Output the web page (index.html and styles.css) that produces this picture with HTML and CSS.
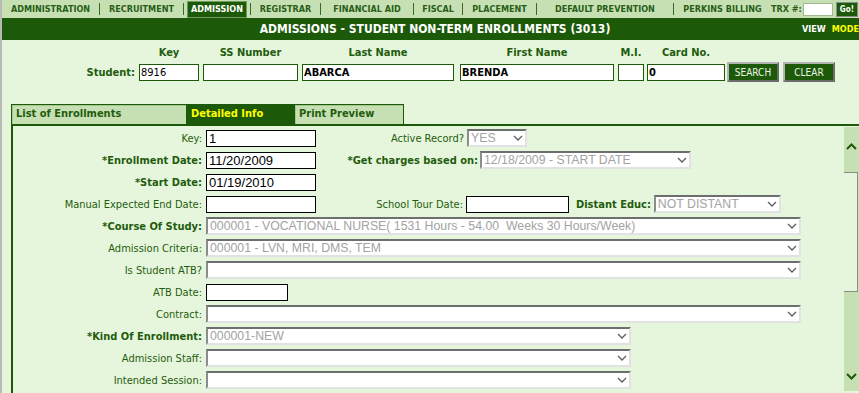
FILE: index.html
```html
<!DOCTYPE html>
<html lang="en">
<head>
    <meta charset="UTF-8">
    <meta name="viewport" content="width=device-width, initial-scale=1.0">
    <title>Admissions - Student Non-Term Enrollments</title>
    <link rel="stylesheet" href="styles.css">
</head>
<body>
    <div class="menu">
        <a class="menu-item mi-administration" href="#">ADMINISTRATION</a><span class="sep"></span>
        <a class="menu-item mi-recruitment" href="#">RECRUITMENT</a><span class="sep"></span>
        <a class="menu-item mi-admission" href="#"><span class="active">ADMISSION</span></a><span class="sep"></span>
        <a class="menu-item mi-registrar" href="#">REGISTRAR</a><span class="sep"></span>
        <a class="menu-item mi-financial" href="#">FINANCIAL AID</a><span class="sep"></span>
        <a class="menu-item mi-fiscal" href="#">FISCAL</a><span class="sep"></span>
        <a class="menu-item mi-placement" href="#">PLACEMENT</a><span class="sep"></span>
        <a class="menu-item mi-default" href="#">DEFAULT PREVENTION</a><span class="sep"></span>
        <a class="menu-item mi-perkins" href="#">PERKINS BILLING</a>
        <div class="trx">
            <span>TRX #:</span>
            <input type="text" class="trx-input">
            <button class="go">Go!</button>
        </div>
    </div>

    <div class="titlebar">
        <h1>ADMISSIONS - STUDENT NON-TERM ENROLLMENTS (3013)</h1>
        <div class="mode">VIEW<span>MODE</span></div>
    </div>

    <div class="search-grid">
        <span></span>
        <span class="col-head f-key">Key</span>
        <span class="col-head f-ss">SS Number</span>
        <span class="col-head f-last">Last Name</span>
        <span class="col-head f-first">First Name</span>
        <span class="col-head f-mi">M.I.</span>
        <span class="col-head f-card">Card No.</span>
        <span></span>
        <span></span>

        <label class="student-label" for="s-key">Student:</label>
        <input type="text" id="s-key" class="s-input f-key" value="8916">
        <input type="text" class="s-input f-ss" value="">
        <input type="text" class="s-input f-last strong" value="ABARCA">
        <input type="text" class="s-input f-first strong" value="BRENDA">
        <input type="text" class="s-input f-mi" value="">
        <input type="text" class="s-input f-card strong" value="0">
        <button class="btn">SEARCH</button>
        <button class="btn">CLEAR</button>
    </div>

    <div class="tabs">
        <div class="tab tab-list">List of Enrollments</div>
        <div class="tab tab-detail active">Detailed Info</div>
        <div class="tab tab-print">Print Preview</div>
    </div>

    <div class="panel">
        <div class="form">
            <div class="row">
                <label class="lbl">Key:</label>
                <input type="text" class="txt" value="1">
                <label class="lbl2 sub-active">Active Record?</label>
                <span class="sel w-active">
                    <select disabled><option>YES</option></select>
                    <svg class="chev" viewBox="0 0 10 6"><polyline points="1,1 5,5 9,1"/></svg>
                </span>
            </div>
            <div class="row">
                <label class="lbl req">*Enrollment Date:</label>
                <input type="text" class="txt" value="11/20/2009">
                <label class="lbl2 sub-charges req">*Get charges based on:</label>
                <span class="sel w-charges">
                    <select disabled><option>12/18/2009 - START DATE</option></select>
                    <svg class="chev" viewBox="0 0 10 6"><polyline points="1,1 5,5 9,1"/></svg>
                </span>
            </div>
            <div class="row">
                <label class="lbl req">*Start Date:</label>
                <input type="text" class="txt" value="01/19/2010">
            </div>
            <div class="row">
                <label class="lbl">Manual Expected End Date:</label>
                <input type="text" class="txt" value="">
                <label class="lbl2 sub-tour">School Tour Date:</label>
                <input type="text" class="txt w-tour" value="">
                <label class="lbl-distant req">Distant Educ:</label>
                <span class="sel w-distant">
                    <select disabled><option>NOT DISTANT</option></select>
                    <svg class="chev" viewBox="0 0 10 6"><polyline points="1,1 5,5 9,1"/></svg>
                </span>
            </div>
            <div class="row">
                <label class="lbl req">*Course Of Study:</label>
                <span class="sel w-long">
                    <select disabled><option>000001 - VOCATIONAL NURSE( 1531 Hours - 54.00&nbsp; Weeks 30 Hours/Week)</option></select>
                    <svg class="chev" viewBox="0 0 10 6"><polyline points="1,1 5,5 9,1"/></svg>
                </span>
            </div>
            <div class="row">
                <label class="lbl">Admission Criteria:</label>
                <span class="sel w-long">
                    <select disabled><option>000001 - LVN, MRI, DMS, TEM</option></select>
                    <svg class="chev" viewBox="0 0 10 6"><polyline points="1,1 5,5 9,1"/></svg>
                </span>
            </div>
            <div class="row">
                <label class="lbl">Is Student ATB?</label>
                <span class="sel w-long">
                    <select><option></option></select>
                    <svg class="chev" viewBox="0 0 10 6"><polyline points="1,1 5,5 9,1"/></svg>
                </span>
            </div>
            <div class="row">
                <label class="lbl">ATB Date:</label>
                <input type="text" class="txt w-atb" value="">
            </div>
            <div class="row">
                <label class="lbl">Contract:</label>
                <span class="sel w-long">
                    <select><option></option></select>
                    <svg class="chev" viewBox="0 0 10 6"><polyline points="1,1 5,5 9,1"/></svg>
                </span>
            </div>
            <div class="row">
                <label class="lbl req">*Kind Of Enrollment:</label>
                <span class="sel w-short">
                    <select disabled><option>000001-NEW</option></select>
                    <svg class="chev" viewBox="0 0 10 6"><polyline points="1,1 5,5 9,1"/></svg>
                </span>
            </div>
            <div class="row">
                <label class="lbl">Admission Staff:</label>
                <span class="sel w-short">
                    <select><option></option></select>
                    <svg class="chev" viewBox="0 0 10 6"><polyline points="1,1 5,5 9,1"/></svg>
                </span>
            </div>
            <div class="row">
                <label class="lbl">Intended Session:</label>
                <span class="sel w-short">
                    <select><option></option></select>
                    <svg class="chev" viewBox="0 0 10 6"><polyline points="1,1 5,5 9,1"/></svg>
                </span>
            </div>
        </div>

        <div class="scrollbar">
            <div class="sb-up"><svg viewBox="0 0 11 7"><polyline points="1,6 5.5,1.5 10,6"/></svg></div>
            <div class="sb-gap"></div>
            <div class="sb-thumb"></div>
            <div class="sb-rest"></div>
            <div class="sb-down"><svg viewBox="0 0 11 7"><polyline points="1,1 5.5,5.5 10,1"/></svg></div>
        </div>
    </div>
</body>
</html>
```

FILE: styles.css
```css
html {
    overflow: hidden;
}

body {
    margin: 0;
    min-height: 100vh;
    border-left: 2px solid #b9b9b9;
    background-color: #e6f6dc;
    font-family: "DejaVu Sans Condensed", "DejaVu Sans", sans-serif;
    font-stretch: condensed;
    font-size: 11px;
    color: #1f5c0d;
}

/* top menu */
.menu {
    display: flex;
    align-items: center;
    height: 18px;
    background-color: #c7e0b3;
}

.menu-item {
    display: block;
    text-align: center;
    font-size: 9px;
    font-weight: bold;
    line-height: 12px;
    color: #285e18;
    text-decoration: none;
}

.mi-administration { width: 97px; }
.mi-recruitment { width: 83px; }
.mi-admission { width: 66px; }
.mi-registrar { width: 69px; }
.mi-financial { width: 92px; }
.mi-fiscal { width: 48px; }
.mi-placement { width: 73px; }
.mi-default { width: 136px; }
.mi-perkins { width: 97px; }

.menu-item .active {
    display: inline-block;
    padding: 0 3px;
    line-height: 15px;
    background-color: #1c5a0a;
    border: 1px solid #6f9b5c;
    color: #fff;
}

.sep {
    width: 1px;
    height: 12px;
    background-color: #3b6a2a;
}

.trx {
    display: flex;
    align-items: center;
    font-size: 9px;
    font-weight: bold;
    color: #285e18;
}

.trx-input {
    box-sizing: border-box;
    width: 30px;
    height: 13px;
    margin: 0 0 0 1px;
    padding: 0;
    border: 1px solid #9fb890;
    background: #fff;
}

.go {
    box-sizing: border-box;
    width: 22px;
    height: 15px;
    margin-left: 3px;
    padding: 0;
    border: 1px solid #8a8a8a;
    background-color: #1c5a0a;
    color: #fff;
    font-family: inherit;
    font-size: 8px;
    font-weight: bold;
}

/* title */
.titlebar {
    display: flex;
    align-items: center;
    height: 22px;
    background-color: #1c5a0a;
    color: #fff;
}

.titlebar h1 {
    flex: 1;
    margin: 0;
    padding-left: 66px;
    text-align: center;
    font-size: 12px;
}

.mode {
    flex: none;
    width: 57px;
    white-space: nowrap;
    font-size: 9px;
    font-weight: bold;
}

.mode span {
    margin-left: 6px;
    color: #ffff00;
}

/* student search */
.search-grid {
    display: grid;
    grid-template-columns: 137px 64px 99px 158px 158px 29px 80px 56px 51px;
    grid-template-rows: 15px 20px;
    row-gap: 2px;
    align-items: center;
    padding-top: 5px;
}

.col-head {
    display: block;
    text-align: center;
    font-weight: bold;
    line-height: 15px;
}

.student-label {
    padding-right: 4px;
    text-align: right;
    font-weight: bold;
}

.f-key { width: 60px; }
.f-ss { width: 95px; }
.f-last { width: 152px; }
.f-first { width: 154px; }
.f-mi { width: 26px; }
.f-card { width: 78px; }

.s-input {
    box-sizing: border-box;
    height: 17px;
    margin: 0;
    padding: 0 1px;
    border: 1px solid #1c5a0a;
    background: #fff;
    font-family: inherit;
    font-stretch: condensed;
    font-size: 11px;
    color: #000;
}

.s-input.strong {
    font-weight: bold;
}

.btn {
    box-sizing: border-box;
    width: 52px;
    height: 20px;
    padding: 0;
    border: 2px solid;
    border-color: #b4b4b4 #6c6c6c #6c6c6c #b4b4b4;
    background-color: #1c5a0a;
    color: #eef5e8;
    font-family: inherit;
    font-stretch: condensed;
    font-size: 10px;
}

/* tabs */
.tabs {
    display: flex;
    margin: 22px 0 0 9px;
}

.tab {
    box-sizing: border-box;
    height: 20px;
    padding-left: 4px;
    line-height: 18px;
    font-weight: bold;
    background-color: #c7e0b3;
    border: 1px solid #1c5a0a;
    border-bottom: none;
    box-shadow: inset 1px 1px 0 #a4c88d;
}

.tab + .tab {
    border-left: none;
}

.tab-list { width: 176px; }
.tab-detail { width: 108px; }
.tab-print { width: 109px; }

.tab.active {
    background-color: #1c5a0a;
    color: #ffff00;
    box-shadow: none;
}

/* detail panel */
.panel {
    display: flex;
    margin-left: 9px;
    border-top: 2px solid #1c5a0a;
    border-left: 2px solid #1c5a0a;
}

.form {
    flex: 1;
    padding: 1px 0 8px;
}

.row {
    display: flex;
    align-items: center;
    height: 22px;
}

.lbl {
    width: 189px;
    margin-right: 4px;
    text-align: right;
    white-space: nowrap;
}

.req {
    font-weight: bold;
}

.lbl2 {
    margin-right: 3px;
    text-align: right;
    white-space: nowrap;
}

.sub-active { width: 148px; }
.sub-charges { width: 162px; margin-right: 2px; }
.sub-tour { width: 147px; }

.lbl-distant {
    margin: 0 3px 0 7px;
    white-space: nowrap;
}

.txt {
    box-sizing: border-box;
    width: 110px;
    height: 17px;
    margin: 0;
    padding: 0 2px;
    border: 1px solid #000;
    background: #fff;
    font-family: "Liberation Sans", Arial, sans-serif;
    font-size: 13px;
    color: #000;
}

.w-tour { width: 103px; }
.w-atb { width: 82px; }

.sel {
    position: relative;
    display: block;
    height: 18px;
}

.sel select {
    appearance: none;
    box-sizing: border-box;
    width: 100%;
    height: 18px;
    margin: 0;
    padding: 0 0 0 2px;
    border: 2px solid;
    border-color: #6e6e6e #e2e2e2 #e2e2e2 #8c8c8c;
    border-radius: 0;
    background-color: #fff;
    font-family: "Liberation Sans", Arial, sans-serif;
    font-size: 12.3px;
    color: #000;
}

.sel select:disabled {
    color: #a3a3a3;
    opacity: 1;
}

.chev {
    position: absolute;
    right: 4px;
    top: 6px;
    width: 10px;
    height: 6px;
    fill: none;
    stroke: #5e5e5e;
    stroke-width: 1.3;
}

.w-active { width: 60px; }
.w-charges { width: 211px; }
.w-distant { width: 127px; }
.w-long { width: 595px; }
.w-short { width: 425px; }

/* scrollbar of the panel */
.scrollbar {
    flex: none;
    display: flex;
    flex-direction: column;
    width: 15px;
    height: 264px;
    margin-top: 1px;
    background-color: #c7e0b3;
}

.sb-up,
.sb-down {
    display: flex;
    align-items: center;
    justify-content: center;
}

.sb-up { height: 38px; }
.sb-down { height: 30px; }
.sb-gap { height: 7px; }
.sb-rest { flex: 1; }

.sb-thumb {
    box-sizing: border-box;
    width: 14px;
    height: 120px;
    background-color: #e6f6dc;
    border: 1px solid #8a8a8a;
    border-left: none;
}

.scrollbar svg {
    width: 11px;
    height: 7px;
    fill: none;
    stroke: #1c5a0a;
    stroke-width: 2;
}
```
